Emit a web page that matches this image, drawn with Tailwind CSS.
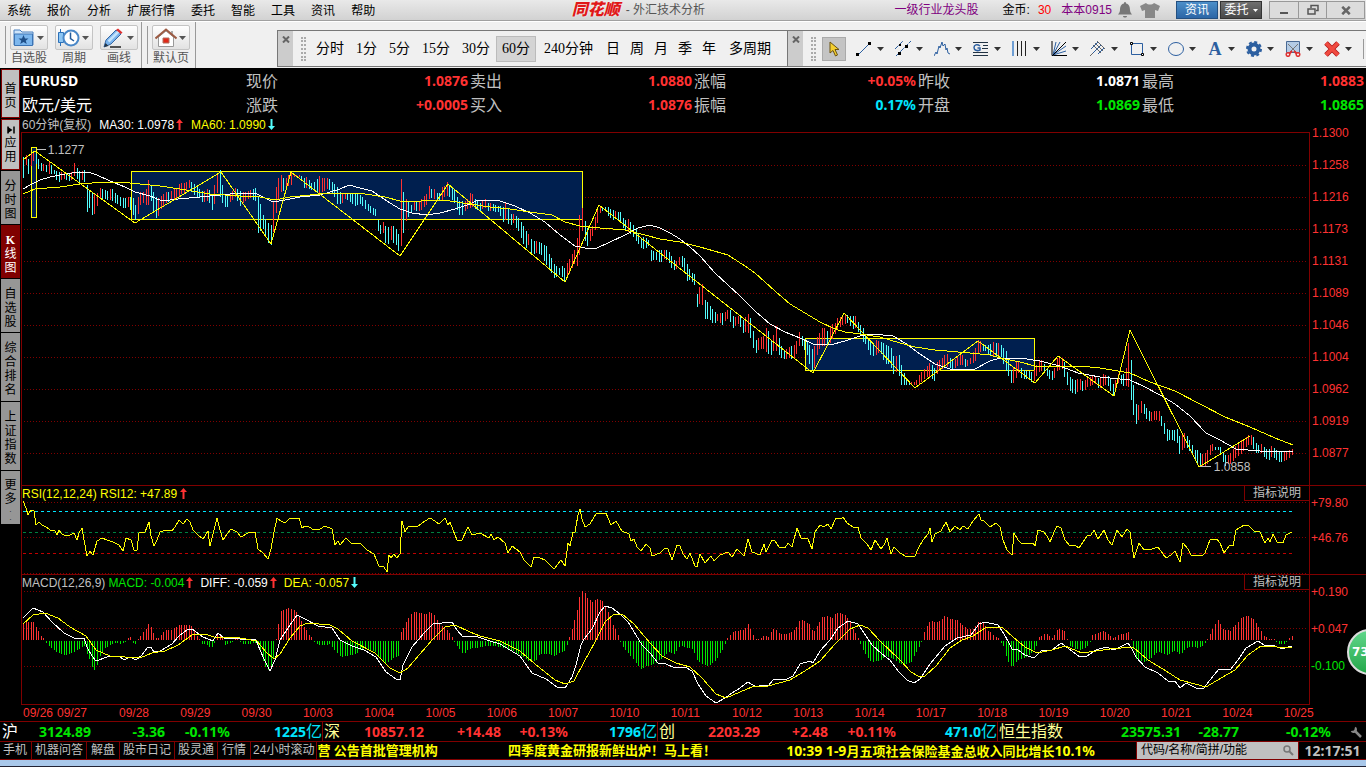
<!DOCTYPE html>
<html lang="zh-CN">
<head>
  <meta charset="UTF-8">
  <meta name="viewport" content="width=device-width, initial-scale=1.0">
  <title>同花顺 - 外汇技术分析</title>
  <script src="https://cdn.jsdelivr.net/npm/@tailwindcss/browser@4"></script>
</head>
<body class="relative flex min-h-screen flex-col overflow-x-hidden bg-black text-[12px] leading-4 text-[#c0c0c0] font-['Liberation_Sans','Noto_Sans_CJK_SC',sans-serif]">

  <!-- Símbolos reutilizados -->
  <svg class="hidden">
    <symbol id="up" viewBox="0 0 7 11"><path d="M3.5 0L7 4H4.5V11H2.5V4H0Z" fill="#ff3232"/></symbol>
    <symbol id="down" viewBox="0 0 7 11"><path d="M3.5 11L7 7H4.5V0H2.5V7H0Z" fill="#54fcfc"/></symbol>
    <symbol id="caret" viewBox="0 0 7 4"><path d="M0 0H7L3.5 4Z" fill="currentColor"/></symbol>
    <symbol id="close" viewBox="0 0 8 7"><path d="M1 0.5L7 6.5M7 0.5L1 6.5" stroke="#666" stroke-width="2"/></symbol>
  </svg>

  <!-- Menu -->
  <header class="flex h-[21px] items-center border-b border-[#a0a0a0] bg-linear-to-b from-[#e9e9e9] to-[#d2d2d2] text-black">
    <nav class="flex gap-4 pt-px pl-[7px] whitespace-nowrap">
      <a href="#">系统</a><a href="#">报价</a><a href="#">分析</a><a href="#">扩展行情</a><a href="#">委托</a><a href="#">智能</a><a href="#">工具</a><a href="#">资讯</a><a href="#">帮助</a>
    </nav>
    <h1 class="flex flex-1 items-center justify-center gap-1.5 pl-[7px] whitespace-nowrap text-[#555]">
      <span class="text-[16px] font-black italic text-[#e01818] [text-shadow:0_0_2px_#fff]">同花顺</span>
      <span>- 外汇技术分析</span>
    </h1>
    <div class="flex items-center whitespace-nowrap">
      <a href="#" class="mr-6 text-[#800080]">一级行业龙头股</a>
      <span class="mr-2">金币:</span>
      <span class="mr-2.5 text-[#ff0000]">30</span>
      <a href="#" class="mr-1.5 text-[#800080]">本本0915</a>
      <svg class="mr-2 h-4 w-[14px]" viewBox="0 0 14 16"><path d="M7 0C8 0 8 1 8 1.500C11 2 12 5 12 8C12 10 13 11 14 12.500H0C1 11 2 10 2 8C2 5 3 2 6 1.500C6 1 6 0 7 0ZM5 14H9C9 16 5 16 5 14Z" fill="#777"/></svg>
      <svg class="mr-4 h-4 w-5" viewBox="0 0 20 16"><path d="M6 1C8 3 12 3 14 1L20 4L18 9L15 8V16H5V8L2 9L0 4Z" fill="#888"/></svg>
      <button class="mr-0.5 h-[18px] w-[42px] border border-[#234f80] bg-linear-to-b from-[#4c8fc9] to-[#2c66a6] leading-4 text-white">资讯</button>
      <button class="mr-[7px] flex h-[18px] w-[42px] items-center justify-center gap-1 border border-[#333] bg-linear-to-b from-[#707070] to-[#484848] leading-4 text-white">委托<svg class="h-[3px] w-[5px]"><use href="#caret"/></svg></button>
      <div class="mr-px flex h-[18px] divide-x divide-[#999] border border-[#999] bg-[#dcdcdc]">
        <button class="flex w-[29px] items-center justify-center" aria-label="最小化"><svg class="h-3 w-3" viewBox="0 0 12 12"><path d="M2 9H10" stroke="#555" stroke-width="2"/></svg></button>
        <button class="flex w-[28px] items-center justify-center" aria-label="还原"><svg class="h-3 w-3" viewBox="0 0 12 12"><path d="M4 4V1.500H11V6.500H9M1 5H8V10H1Z" fill="none" stroke="#555" stroke-width="1.500"/></svg></button>
        <button class="flex w-[37px] items-center justify-center" aria-label="关闭"><svg class="h-[9px] w-[10px]"><use href="#close"/></svg></button>
      </div>
    </div>
  </header>

  <!-- Barra de ferramentas -->
  <div class="flex h-[47px] border-t border-white bg-[#f0f0f0] text-black">
    <div class="flex border-r border-[#999] pl-[3px] pr-[3px]">
      <i class="mt-1 mb-1 w-[3px] border-r border-[#999]"></i>
      <div class="flex gap-[7px] pl-1 pt-[3px] text-[#555]">
        <button class="flex w-[38px] flex-col items-center whitespace-nowrap">
          <span class="flex h-[25px] w-full items-center justify-between rounded-xs border border-[#c4c4c4] bg-linear-to-b from-white to-[#e2e2e2] px-0.5">
            <svg class="h-5 w-[21px]" viewBox="0 0 21 20"><path d="M1 17V2H7L9 4H20V17Z" fill="#cfe5fa" stroke="#4a80bf"/><path d="M1.500 6H19.500V17.500H1.500Z" fill="#7db7ee" stroke="#3c74b4"/><path d="M10.500 7L12 10.500H15.500L12.700 12.700L13.800 16L10.500 14L7.200 16L8.300 12.700L5.500 10.500H9Z" fill="#1f4f88"/></svg>
            <svg class="mr-px h-1 w-[7px]"><use href="#caret"/></svg>
          </span>自选股</button>
        <button class="flex w-[38px] flex-col items-center whitespace-nowrap">
          <span class="flex h-[25px] w-full items-center justify-between rounded-xs border border-[#c4c4c4] bg-linear-to-b from-white to-[#e2e2e2] px-0.5">
            <svg class="h-5 w-[22px]" viewBox="0 0 22 20"><path d="M2.500 1V18" stroke="#2c70b8"/><path d="M0.500 4.500H5.500V14.500H0.500Z" fill="#8cc6f4" stroke="#2c70b8"/><circle cx="13" cy="10" r="7.500" fill="#fff" stroke="#4a88c8" stroke-width="2"/><path d="M12.500 4.500V10.500L16 13" fill="none" stroke="#235c9c" stroke-width="1.500"/></svg>
            <svg class="mr-px h-1 w-[7px]"><use href="#caret"/></svg>
          </span>周期</button>
        <button class="flex w-[38px] flex-col items-center whitespace-nowrap">
          <span class="flex h-[25px] w-full items-center justify-between rounded-xs border border-[#c4c4c4] bg-linear-to-b from-white to-[#e2e2e2] px-0.5">
            <svg class="h-5 w-[21px]" viewBox="0 0 21 20"><path d="M1 19L3 12L13 2L18 6L8 16Z" fill="#78b2ec" stroke="#3768a4"/><path d="M5.500 13.500L15.500 3.500" stroke="#c4e2fb" stroke-width="2.500"/><path d="M13 2L15 0.500L19.500 4.500L18 6Z" fill="#e03030"/><path d="M1 19L2.500 15L5.500 18Z" fill="#234"/><path d="M7 19H18" stroke="#222" stroke-width="1.500"/></svg>
            <svg class="mr-px h-1 w-[7px]"><use href="#caret"/></svg>
          </span>画线</button>
      </div>
    </div>
    <div class="flex border-r border-[#999] pl-[3px] pr-[5px]">
      <i class="mt-1 mb-1 w-[3px] border-r border-[#999]"></i>
      <div class="pl-1 pt-[3px] text-[#555]">
        <button class="flex w-[38px] flex-col items-center whitespace-nowrap">
          <span class="flex h-[25px] w-full items-center justify-between rounded-xs border border-[#c4c4c4] bg-linear-to-b from-white to-[#e2e2e2] px-0.5">
            <svg class="h-5 w-[22px]" viewBox="0 0 22 20"><path d="M3.500 9V18.500H18.500V9L11 3Z" fill="#fff" stroke="#999"/><path d="M17 3V7" stroke="#aaa" stroke-width="2"/><path d="M0.500 10.500L11 1.500L21.500 10.500" fill="none" stroke="#9c5a42" stroke-width="2"/><path d="M8 10H14V15H8Z" fill="#e02818" stroke="#b07060"/></svg>
            <svg class="mr-px h-1 w-[7px]"><use href="#caret"/></svg>
          </span>默认页</button>
      </div>
    </div>

    <!-- Períodos -->
    <div class="mt-2 ml-[81px] flex h-[37px] items-center border-y border-l border-[#777] font-['Liberation_Serif','Noto_Sans_CJK_SC',serif] text-[14px] whitespace-nowrap">
      <button class="flex h-full w-[15px] justify-center bg-[#ccc] pt-[5px]" aria-label="关闭"><svg class="h-[7px] w-2"><use href="#close"/></svg></button>
      <i class="mr-1 ml-2 h-6 w-[5px] border-x-2 border-dotted border-[#aaa]"></i>
      <button class="h-[26px] px-1.5">分时</button>
      <button class="h-[26px] px-1.5">1分</button>
      <button class="h-[26px] px-1.5">5分</button>
      <button class="h-[26px] px-1.5">15分</button>
      <button class="h-[26px] px-1.5">30分</button>
      <button class="h-[26px] border border-[#bbb] bg-[#d4d4d4] px-[5px]">60分</button>
      <button class="h-[26px] px-2">240分钟</button>
      <button class="h-[26px] px-[5px]">日</button>
      <button class="h-[26px] px-[5px]">周</button>
      <button class="h-[26px] px-[5px]">月</button>
      <button class="h-[26px] px-[5px]">季</button>
      <button class="h-[26px] px-[5px]">年</button>
      <button class="h-[26px] pl-2 pr-4">多周期</button>
    </div>

    <!-- Ferramentas de desenho -->
    <div class="mt-2 flex h-[37px] flex-1 items-center border-y border-l border-[#777] text-[#333]">
      <button class="flex h-full w-[15px] justify-center bg-[#ccc] pt-[5px]" aria-label="关闭"><svg class="h-[7px] w-2"><use href="#close"/></svg></button>
      <i class="mr-1.5 ml-2 h-6 w-[5px] border-x-2 border-dotted border-[#aaa]"></i>
      <button class="mr-2.5 flex h-6 w-6 items-center justify-center border border-[#aaa] bg-[#c4c4c4]" aria-label="选择"><svg class="h-4 w-3" viewBox="0 0 12 16"><path d="M2 1V12L5 9.500L7.500 15L9.500 14L7 8.500H11Z" fill="#f4cf30" stroke="#6b5310"/></svg></button>
      <button class="flex w-[39px] items-center gap-[5px]" aria-label="线段"><svg class="h-4 w-4" viewBox="0 0 16 16"><path d="M2 14L14 2" stroke="#2c5fa0"/><path d="M0 12H3V15H0ZM12 1H15V4H12Z" fill="#000"/></svg><svg class="h-1 w-[7px]"><use href="#caret"/></svg></button>
      <button class="flex w-[39px] items-center gap-[5px]" aria-label="平行线"><svg class="h-4 w-4" viewBox="0 0 16 16"><path d="M0 8L8 0M1 15L16 0" stroke="#2c5fa0" stroke-dasharray="5 1"/><path d="M4 3H6V5H4ZM10 4H13V7H10ZM3 11H6V14H3Z" fill="#000"/></svg><svg class="h-1 w-[7px]"><use href="#caret"/></svg></button>
      <button class="flex w-[39px] items-center gap-[5px]" aria-label="波浪"><svg class="h-4 w-4" viewBox="0 0 16 16"><path d="M0 15L2 11L3 13L5 5L6 7L8 1L9 5L11 3L12 9L13 7L14 12L16 13" fill="none" stroke="#2c5fa0"/></svg><svg class="h-1 w-[7px]"><use href="#caret"/></svg></button>
      <button class="flex w-[39px] items-center gap-[5px]" aria-label="黄金分割"><svg class="h-4 w-4" viewBox="0 0 16 16"><path d="M0 1.500H15M10 4.500H15M9 7.500H15M0 11.500H15M0 14.500H15" stroke="#234" /><path d="M7 5C4 2.500 1 4 1 6.500C1 9 4 10.500 7 9V7H4.500" fill="none" stroke="#2c5fa0" stroke-width="1.500"/></svg><svg class="h-1 w-[7px]"><use href="#caret"/></svg></button>
      <button class="flex w-[39px] items-center gap-[5px]" aria-label="周期线"><svg class="h-4 w-4" viewBox="0 0 16 16"><path d="M0.500 0V15M1.500 0V15" stroke="#6f9fd4"/><path d="M5.500 0V15M9.500 0V15M13.500 0V15" stroke="#222"/></svg><svg class="h-1 w-[7px]"><use href="#caret"/></svg></button>
      <button class="flex w-[39px] items-center gap-[5px]" aria-label="速阻线"><svg class="h-4 w-4" viewBox="0 0 16 16"><path d="M1 0V14.500H16" fill="none" stroke="#000"/><path d="M2 14L5 1M2 14L9 1M2 14L15 5M2 14L15 10" stroke="#2c5fa0"/><path d="M2 14L15 1" stroke="#000"/></svg><svg class="h-1 w-[7px]"><use href="#caret"/></svg></button>
      <button class="flex w-[39px] items-center gap-[5px]" aria-label="安德鲁音叉"><svg class="h-4 w-4" viewBox="0 0 16 16"><path d="M0 15L5 10M3 4L11 12M5 2L13 10M7 0L15 8" stroke="#666"/><path d="M1 8L8 1M3 12L11 4M8 13L14 7" stroke="#2c5fa0"/></svg><svg class="h-1 w-[7px]"><use href="#caret"/></svg></button>
      <button class="flex w-[39px] items-center gap-[5px]" aria-label="矩形"><svg class="h-4 w-4" viewBox="0 0 16 16"><path d="M2.500 2.500H13.500V13.500H2.500Z" fill="none" stroke="#2c5fa0"/><path d="M1.500 1.500H3.500V3.500H1.500ZM12.500 12.500H14.500V14.500H12.500Z" fill="#fff" stroke="#000"/></svg><svg class="h-1 w-[7px]"><use href="#caret"/></svg></button>
      <button class="flex w-[39px] items-center gap-[5px]" aria-label="圆形"><svg class="h-4 w-4" viewBox="0 0 16 16"><ellipse cx="8" cy="8" rx="7.500" ry="6.500" fill="none" stroke="#2c5fa0"/></svg><svg class="h-1 w-[7px]"><use href="#caret"/></svg></button>
      <button class="flex w-[39px] items-center gap-[5px]" aria-label="文字"><span class="w-4 text-center font-['Liberation_Serif',serif] text-[18px] font-bold text-[#2c5fa0]">A</span><svg class="h-1 w-[7px]"><use href="#caret"/></svg></button>
      <button class="flex w-[39px] items-center gap-[5px]" aria-label="设置"><svg class="h-4 w-4" viewBox="0 0 16 16"><circle cx="8" cy="8" r="4.500" fill="none" stroke="#2c5fa0" stroke-width="4"/><circle cx="8" cy="8" r="7" fill="none" stroke="#2c5fa0" stroke-width="2" stroke-dasharray="3 2.500"/></svg><svg class="h-1 w-[7px]"><use href="#caret"/></svg></button>
      <button class="flex w-[39px] items-center gap-[5px]" aria-label="删除画线"><svg class="h-4 w-4" viewBox="0 0 16 16"><path d="M1.500 0.500H14.500V11.500H1.500Z" fill="#b4cbe4" stroke="#4a6a94"/><path d="M3 3L12 12M13 3L4 12" stroke="#777"/><path d="M7 10L4 13M9 10L12 13" stroke="#e03030" stroke-width="2"/><circle cx="3" cy="13.500" r="1.800" fill="#f0f0f0" stroke="#e03030" stroke-width="1.500"/><circle cx="13" cy="13.500" r="1.800" fill="#f0f0f0" stroke="#e03030" stroke-width="1.500"/></svg><svg class="h-1 w-[7px]"><use href="#caret"/></svg></button>
      <button class="flex w-[39px] items-center gap-[5px]" aria-label="全部删除"><svg class="h-4 w-4" viewBox="0 0 16 16"><path d="M2 2L14 14M14 2L2 14" stroke="#b01818" stroke-width="5"/><path d="M2 2L14 14M14 2L2 14" stroke="#f04a40" stroke-width="3.500"/></svg><svg class="h-1 w-[7px]"><use href="#caret"/></svg></button>
      <i class="h-5 w-px bg-[#999]"></i>
    </div>
  </div>

  <div class="flex flex-1">
    <!-- Abas laterais -->
    <nav class="flex w-[21px] shrink-0 flex-col gap-px px-px pt-px text-center leading-[14px] text-black">
      <a href="#" class="flex h-[49px] items-center justify-center border border-[#800000] bg-[#c0c0c0] px-[3px] pt-1">首页</a>
      <a href="#" class="flex h-[51px] flex-col items-center justify-center gap-0.5 border border-[#800000] bg-[#c0c0c0] px-[3px]"><svg class="h-2 w-2 shrink-0" viewBox="0 0 8 8"><path d="M1 0.500V7.500M7 0.500V7.500" stroke="#000" stroke-width="1.500"/><path d="M1 1L5.500 4L1 7Z" fill="#000"/></svg>应用</a>
      <a href="#" class="flex h-[53px] items-center justify-center bg-[#969696] px-[3px] pt-1">分时图</a>
      <a href="#" class="flex h-[53px] items-center justify-center bg-[#800000] px-[3px] pt-1 text-white"><span><b class="font-['Liberation_Serif',serif]">K</b> 线图</span></a>
      <a href="#" class="flex h-[53px] items-center justify-center bg-[#969696] px-[3px] pt-1">自选股</a>
      <a href="#" class="flex h-[68px] items-center justify-center bg-[#969696] px-[3px] pt-1">综合排名</a>
      <a href="#" class="flex h-[68px] items-center justify-center bg-[#969696] px-[3px] pt-1">上证指数</a>
      <a href="#" class="flex h-[53px] flex-col items-center bg-[#969696] px-[3px] pt-[7px]">更多<span class="text-[7px] leading-2">.<br>.</span></a>
    </nav>

    <main class="flex min-w-0 flex-1 flex-col">
      <!-- Cotações -->
      <dl class="grid grid-flow-col grid-cols-6 grid-rows-2 pt-px pl-px text-[16px] leading-6 whitespace-nowrap font-['Noto_Sans','Noto_Sans_CJK_SC',sans-serif]">
        <div class="text-[14px] font-bold text-white">EURUSD</div>
        <div class="text-white">欧元/美元</div>
        <div class="flex justify-between pr-[2px]"><dt>现价</dt><dd class="text-[14px] font-bold text-[#ff3232]">1.0876</dd></div>
        <div class="flex justify-between pr-[2px]"><dt>涨跌</dt><dd class="text-[14px] font-bold text-[#ff3232]">+0.0005</dd></div>
        <div class="flex justify-between pr-[2px]"><dt>卖出</dt><dd class="text-[14px] font-bold text-[#ff3232]">1.0880</dd></div>
        <div class="flex justify-between pr-[2px]"><dt>买入</dt><dd class="text-[14px] font-bold text-[#ff3232]">1.0876</dd></div>
        <div class="flex justify-between pr-[2px]"><dt>涨幅</dt><dd class="text-[14px] font-bold text-[#ff3232]">+0.05%</dd></div>
        <div class="flex justify-between pr-[2px]"><dt>振幅</dt><dd class="text-[14px] font-bold text-[#00e6ff]">0.17%</dd></div>
        <div class="flex justify-between pr-[2px]"><dt>昨收</dt><dd class="text-[14px] font-bold text-white">1.0871</dd></div>
        <div class="flex justify-between pr-[2px]"><dt>开盘</dt><dd class="text-[14px] font-bold text-[#00e600]">1.0869</dd></div>
        <div class="flex justify-between pr-[2px]"><dt>最高</dt><dd class="text-[14px] font-bold text-[#ff3232]">1.0883</dd></div>
        <div class="flex justify-between pr-[2px]"><dt>最低</dt><dd class="text-[14px] font-bold text-[#00e600]">1.0865</dd></div>
      </dl>

      <!-- Gráfico de preços -->
      <section class="flex flex-1">
        <div class="flex min-w-0 flex-1 flex-col">
          <div class="flex h-[15px] items-center gap-2 pl-px">
            <span>60分钟(复权)</span>
            <span class="flex items-center gap-[2px] text-white">MA30: 1.0978<svg class="h-[11px] w-[7px]"><use href="#up"/></svg></span>
            <span class="flex items-center gap-[2px] text-[#ffff00]">MA60: 1.0990<svg class="h-[11px] w-[7px]"><use href="#down"/></svg></span>
          </div>
          <div class="relative min-h-[353px] flex-1 border-x border-t border-[#800000]">
            <svg class="absolute size-full" viewBox="22 133 1287 352" preserveAspectRatio="none" shape-rendering="crispEdges" fill="none">
              <path d="M24 165.500H1308M24 197.500H1308M24 229.500H1308M24 261.500H1308M24 293.500H1308M24 325.500H1308M24 357.500H1308M24 389.500H1308M24 421.500H1308M24 453.500H1308" stroke="#800000" stroke-dasharray="1 2"/>
              <path d="M31.500 147.500H36.500V217.500H31.500ZM131.500 171.500H582.500V219.500H131.500ZM805.500 338.500H1034.500V370.500H805.500Z" fill="#001f4f" stroke="#ffff00"/>
              <path id="fall" stroke="#54fcfc"/>
              <path id="rise" stroke="#ff3232"/>
              <polyline stroke="#fff" points="23,189 30,185 40,180 50,177 65,174 80,172 88,172 97,175 110,181 125,187 135,192 150,196 162,201 178,199 200,197 230,194 255,193 265,198 273,202 285,200 300,197 320,195 340,189 349,185 360,188 372,191 381,197 390,203 400,209 412,213 427,215 440,213 455,209 470,204 476,201 490,200 500,201 515,206 530,213 545,222 560,235 575,246 585,248 597,248 610,242 625,235 638,228 650,225 660,228 670,233 680,239 690,247 700,256 715,273 740,296 755,311 770,324 785,332 800,338 813,344 830,345 845,341 860,336 872,334 893,336 905,343 920,354 935,364 950,369 975,369 990,361 1000,358 1020,358 1040,361 1060,366 1078,373 1100,377 1130,380 1145,387 1160,395 1175,404 1190,416 1206,433 1220,440 1236,449 1260,451 1293,452"/>
              <polyline stroke="#ffff00" points="23,194 35,189 60,187 80,184 105,182 130,183 160,186 180,189 210,194 240,196 260,197 275,200 290,197 320,194 350,193 365,194 385,197 400,201 412,202 430,200 450,201 470,204 490,207 510,209 530,212 552,215 565,222 580,226 600,228 625,230 645,235 660,239 680,242 700,247 728,255 745,266 755,273 775,291 790,304 805,313 820,322 835,329 845,332 860,334 880,337 900,343 915,347 935,350 970,353 990,355 1000,358 1020,362 1035,366 1080,366 1100,368 1130,373 1150,382 1175,391 1200,404 1225,417 1250,427 1275,438 1293,445"/>
              <polyline stroke="#ffff00" points="23,160 35,151 135,223 221,172 271,244 291,172 400,256 448,184 565,282 599,205 813,373 844,313 915,388 978,341 1035,383 1058,356 1114,396 1130,330 1199,467 1250,436"/>
              <path d="M37 149.500H46M1200 466.500H1211" stroke="#c0c0c0"/>
            </svg>
            <span class="absolute top-[2.6%] left-[2%]">1.1277</span>
            <span class="absolute top-[92.6%] left-[92.6%]">1.0858</span>
          </div>
        </div>
        <div class="flex w-14 flex-col pl-[2px] text-[#ff3232]">
          <span class="flex flex-2 items-center">1.1300</span>
          <span class="flex flex-2 items-center">1.1258</span>
          <span class="flex flex-2 items-center">1.1216</span>
          <span class="flex flex-2 items-center">1.1173</span>
          <span class="flex flex-2 items-center">1.1131</span>
          <span class="flex flex-2 items-center">1.1089</span>
          <span class="flex flex-2 items-center">1.1046</span>
          <span class="flex flex-2 items-center">1.1004</span>
          <span class="flex flex-2 items-center">1.0962</span>
          <span class="flex flex-2 items-center">1.0919</span>
          <span class="flex flex-2 items-center">1.0877</span>
          <span class="flex-1"></span>
        </div>
      </section>

      <!-- RSI -->
      <section class="flex border-t border-[#800000]">
        <div class="min-w-0 flex-1 border-x border-[#800000]">
          <div class="flex h-[15px] items-center justify-between">
            <span class="flex items-center gap-[3px] text-[#ffff00]">RSI(12,12,24) RSI12: +47.89<svg class="h-[11px] w-[7px]"><use href="#up"/></svg></span>
            <button class="h-[15px] border-b border-l border-[#800000] px-2 leading-[14px]">指标说明</button>
          </div>
          <svg class="h-[73px] w-full" viewBox="22 501 1287 73" preserveAspectRatio="none" shape-rendering="crispEdges" fill="none">
            <path d="M24 502.500H1308M24 537.500H1308M24 573.500H1308" stroke="#800000" stroke-dasharray="1 2"/>
            <path d="M23 511.500H1293" stroke="#00e6ff" stroke-dasharray="3 3"/>
            <path d="M23 532.500H1293" stroke="#008040" stroke-dasharray="3 3"/>
            <path d="M23 553.500H1293" stroke="#c00000" stroke-dasharray="3 3"/>
            <polyline stroke="#ffff00" points="23,501 26,508 28,515 31,510 34,511 36,525 39,522 42,525 46,527 50,530 55,531 57,535 59,530 62,534 66,536 70,535 74,533 77,540 79,533 82,528 84,540 87,556 90,551 93,555 97,541 102,538 107,540 113,542 119,545 123,551 126,538 131,540 134,550 137,550 139,533 145,532 149,522 151,536 154,546 157,540 160,532 166,530 172,531 175,527 179,520 183,524 187,519 190,522 193,530 198,535 203,539 208,531 210,546 214,530 217,518 220,530 223,540 227,534 231,529 237,532 241,537 248,533 255,532 258,549 263,553 268,559 271,549 274,532 277,518 281,521 285,523 289,519 299,518 302,528 305,526 309,527 314,530 320,529 325,526 332,529 335,545 338,541 340,545 346,538 352,544 360,543 367,550 374,554 379,566 384,567 387,572 389,555 391,558 394,554 397,558 400,554 402,521 405,532 408,527 418,526 425,521 430,518 435,521 439,524 445,518 448,525 450,522 453,530 457,540 462,540 468,527 472,535 480,533 489,538 491,534 494,540 498,537 505,543 508,553 512,546 520,552 524,560 531,567 534,557 540,558 545,560 554,569 561,560 565,566 568,543 570,546 573,532 575,532 578,515 580,509 582,519 585,527 590,524 596,514 606,513 611,525 616,521 622,531 629,534 631,541 634,539 637,547 641,551 646,544 650,548 652,556 660,553 665,548 668,549 672,560 677,545 680,546 683,554 687,559 690,553 695,566 697,567 700,554 705,563 711,556 714,561 720,555 728,552 732,557 737,549 744,556 748,539 752,552 760,555 764,544 766,552 772,540 775,541 779,547 785,548 788,543 792,547 797,528 801,538 808,539 812,549 815,532 820,525 824,527 828,524 831,529 836,518 841,519 843,517 847,523 853,527 858,527 861,538 867,544 871,550 875,540 881,549 884,545 887,538 891,554 894,547 900,553 907,557 915,556 918,549 923,540 928,534 930,528 932,542 935,534 941,531 946,522 950,532 955,526 960,530 963,526 968,529 973,521 979,514 981,520 984,521 990,527 996,523 1000,527 1003,540 1007,550 1012,555 1014,533 1018,540 1022,544 1033,543 1035,546 1038,530 1044,532 1047,536 1050,542 1055,530 1057,526 1061,528 1065,540 1070,546 1075,545 1079,548 1085,539 1088,535 1091,535 1094,530 1098,539 1104,530 1108,540 1112,545 1117,530 1122,537 1127,529 1130,532 1134,558 1139,543 1144,550 1152,549 1158,547 1163,554 1166,558 1171,555 1175,551 1180,562 1183,543 1188,549 1191,555 1202,556 1205,553 1210,540 1217,539 1220,543 1224,553 1230,545 1233,546 1236,530 1244,525 1248,525 1254,531 1260,532 1265,543 1268,538 1270,542 1273,534 1277,542 1283,543 1286,535 1292,532"/>
          </svg>
        </div>
        <div class="flex w-14 flex-col gap-[19px] pt-[9px] pl-px text-[#ff3232]"><span>+79.80</span><span>+46.76</span></div>
      </section>

      <!-- MACD -->
      <section class="flex border-t border-[#800000]">
        <div class="min-w-0 flex-1 border-x border-b border-[#800000]">
          <div class="flex h-[15px] items-center gap-[7px]">
            <span class="flex items-center gap-[2px]">MACD(12,26,9) <span class="ml-px text-[#00e600]">MACD: -0.004</span><svg class="h-[11px] w-[7px]"><use href="#up"/></svg></span>
            <span class="flex items-center gap-[2px] text-white">DIFF: -0.059<svg class="h-[11px] w-[7px]"><use href="#up"/></svg></span>
            <span class="flex items-center gap-[2px] text-[#ffff00]">DEA: -0.057<svg class="h-[11px] w-[7px]"><use href="#down"/></svg></span>
            <button class="ml-auto h-[15px] border-b border-l border-[#800000] px-2 leading-[14px]">指标说明</button>
          </div>
          <svg class="h-[114px] w-full" viewBox="22 590 1287 114" preserveAspectRatio="none" shape-rendering="crispEdges" fill="none">
            <path d="M24 591.500H1308M24 628.500H1308M24 666.500H1308" stroke="#800000" stroke-dasharray="1 2"/>
            <path id="plus" stroke="#ff3232"/>
            <path id="minus" stroke="#00e600"/>
            <polyline stroke="#fff" points="23,618 33,608 43,612 52,622 64,633 74,638 84,638 87,647 92,656 96,661 107,657 119,656 124,660 130,657 136,660 142,655 147,648 151,647 154,652 160,651 172,644 179,636 187,630 192,629 203,637 213,641 218,633 224,638 240,639 256,640 260,650 265,661 270,671 275,660 280,640 288,628 297,615 305,619 318,626 332,628 340,640 352,646 364,650 376,657 386,672 396,679 400,680 403,665 412,647 425,632 433,624 452,622 457,630 463,637 475,636 490,641 500,644 510,650 520,656 532,673 546,679 557,687 565,688 572,677 576,665 581,645 584,639 592,629 600,612 605,606 612,608 620,614 628,622 636,635 642,645 650,653 658,663 666,664 675,668 685,667 692,671 698,684 706,696 716,703 725,698 732,693 740,688 748,682 756,687 762,685 768,686 774,679 785,680 793,676 800,664 810,661 813,663 820,651 830,640 838,628 848,621 858,624 866,636 872,645 882,654 890,660 898,671 907,680 914,683 920,679 930,664 945,646 957,638 971,635 979,624 985,622 998,625 1004,634 1009,643 1012,649 1017,649 1025,655 1034,658 1042,650 1052,650 1061,643 1068,648 1080,657 1087,656 1096,650 1106,647 1114,650 1128,643 1132,649 1136,657 1145,667 1158,673 1168,681 1175,681 1180,688 1186,683 1196,688 1204,688 1210,680 1219,669 1230,670 1238,660 1246,648 1258,641 1264,645 1275,646 1282,649 1288,647 1292,646"/>
            <polyline stroke="#ffff00" points="23,624 33,615 45,613 58,618 70,627 86,636 96,650 110,656 140,658 152,653 165,651 178,645 192,635 205,634 214,637 240,638 257,641 266,652 274,659 280,654 290,638 300,626 308,623 330,625 338,629 352,641 375,653 390,668 400,673 408,668 420,654 433,639 445,627 455,625 470,632 480,636 500,641 520,651 535,664 555,680 565,684 574,681 584,662 595,642 605,622 614,614 622,614 634,624 650,643 662,656 676,663 690,667 702,678 716,694 726,698 740,692 752,687 768,686 790,680 808,669 820,661 835,644 850,629 860,625 868,628 880,641 900,660 911,672 918,676 925,676 936,666 950,648 962,640 973,636 985,628 1002,627 1013,637 1025,647 1037,653 1052,650 1065,646 1082,653 1096,651 1110,649 1133,647 1148,660 1166,671 1180,680 1195,684 1206,687 1216,681 1235,670 1248,655 1261,646 1292,648"/>
          </svg>
        </div>
        <div class="flex w-14 flex-col gap-[21px] pt-[9px] pl-px text-[#ff3232]"><span>+0.190</span><span>+0.047</span><span class="text-[#00e600]">-0.100</span></div>
      </section>

      <!-- Datas -->
      <div class="flex h-4 pr-[21px] pl-[2px] text-[#ff3232]">
        <span class="w-[34px]">09/26</span><span class="w-[62px]">09/27</span>
        <span class="flex-1">09/28</span><span class="flex-1">09/29</span><span class="flex-1">09/30</span><span class="flex-1">10/03</span><span class="flex-1">10/04</span><span class="flex-1">10/05</span><span class="flex-1">10/06</span><span class="flex-1">10/07</span><span class="flex-1">10/10</span><span class="flex-1">10/11</span><span class="flex-1">10/12</span><span class="flex-1">10/13</span><span class="flex-1">10/14</span><span class="flex-1">10/17</span><span class="flex-1">10/18</span><span class="flex-1">10/19</span><span class="flex-1">10/20</span><span class="flex-1">10/21</span><span class="flex-1">10/24</span><span class="flex-1">10/25</span>
      </div>
    </main>
  </div>

  <!-- Índices -->
  <div class="grid h-[21px] grid-cols-[323fr_335fr_340fr_368fr] divide-x divide-[#800000] border-y border-[#800000] text-right text-[14px] leading-[19px] font-bold whitespace-nowrap text-[#00e600] font-['Noto_Sans','Noto_Sans_CJK_SC',sans-serif]">
    <div class="flex"><span class="w-[18px] text-[16px] font-normal text-white">沪</span><span class="w-[73px]">3124.89</span><span class="w-[74px]">-3.36</span><span class="w-[65px]">-0.11%</span><span class="flex-1 text-[#00e6ff]">1225<span class="text-[16px] font-normal">亿</span></span></div>
    <div class="flex text-[#ff3232]"><span class="w-[17px] text-[16px] font-normal text-[#ffff96]">深</span><span class="w-[84px]">10857.12</span><span class="w-[77px]">+14.48</span><span class="w-[67px]">+0.13%</span><span class="flex-1 text-[#00e6ff]">1796<span class="text-[16px] font-normal">亿</span></span></div>
    <div class="flex text-[#ff3232]"><span class="w-[17px] text-[16px] font-normal text-[#ffff96]">创</span><span class="w-[85px]">2203.29</span><span class="w-[68px]">+2.48</span><span class="w-[68px]">+0.11%</span><span class="flex-1 text-[#00e6ff]">471.0<span class="text-[16px] font-normal">亿</span></span></div>
    <div class="flex items-center"><span class="w-[65px] text-[16px] font-normal text-[#ffff96]">恒生指数</span><span class="w-[118px]">23575.31</span><span class="w-[58px]">-28.77</span><span class="w-[92px]">-0.12%</span><svg class="mr-1 ml-auto h-3 w-3" viewBox="0 0 12 12"><path d="M4 4L11 11" stroke="#888" stroke-width="2.500"/><path d="M5 1.500A2.500 2.500 0 1 1 1.500 5" fill="none" stroke="#888" stroke-width="2"/></svg></div>
  </div>

  <!-- Notícias e busca -->
  <footer class="flex h-[18px] border-b border-[#800000] leading-[17px] whitespace-nowrap">
    <nav class="flex divide-x divide-[#800000] border-r border-[#800000]">
      <a href="#" class="pr-1 pl-[3px]">手机</a><a href="#" class="px-[3px]">机器问答</a><a href="#" class="px-1">解盘</a><a href="#" class="px-[3px]">股市日记</a><a href="#" class="px-[3px]">股灵通</a><a href="#" class="px-1">行情</a><a href="#" class="px-[2px]">24小时滚动</a>
    </nav>
    <div class="flex min-w-0 flex-1 justify-between overflow-hidden pr-[41px] text-[13px] font-bold text-[#ffff00] font-['Noto_Sans','Noto_Sans_CJK_SC',sans-serif]">
      <span>营 公告首批管理机构</span><span>四季度黄金研报新鲜出炉！马上看！</span><span><span class="text-[14px]">10:39 1-9</span>月五项社会保险基金总收入同比增长<span class="text-[14px]">10.1%</span></span>
    </div>
    <label class="flex w-[163px] items-center border-x border-[#800000] bg-[#c0c0c0] text-black">
      <input type="text" aria-label="搜索" value="代码/名称/简拼/功能" class="min-w-0 flex-1 pl-1 outline-none">
      <svg class="mr-1 h-[11px] w-[11px]" viewBox="0 0 11 11"><circle cx="4" cy="4" r="3" fill="none" stroke="#777" stroke-width="1.500"/><path d="M6 6L10 10" stroke="#777" stroke-width="2"/></svg>
    </label>
    <time class="w-[67px] text-center text-[14px] font-bold font-['Noto_Sans',sans-serif]">12:17:51</time>
  </footer>
  <div class="h-[7px] border-b border-[#223] bg-[#a9c8ea]"></div>

  <!-- Medidor flutuante -->
  <div class="absolute top-[629px] -right-[27px] flex h-[46px] w-[46px] items-center rounded-full border-2 border-[#ddd] bg-linear-to-b from-[#5fd68a] to-[#22a84a] pl-[3px] text-[12px] font-bold text-white font-['DejaVu_Sans',sans-serif]">73</div>

  <script>
    // x, máxima, mínima
    const prices = [
      23,157,177, 26,155,164, 28,159,173, 31,153,165, 34,150,158, 39,161,170, 43,164,170, 46,165,171, 49,162,173, 54,170,173, 57,172,182, 63,172,178, 68,173,180, 72,172,178, 74,163,175, 77,168,178, 80,173,182, 83,170,177, 85,170,184, 87,185,211, 90,192,205, 92,193,214, 95,195,212, 97,193,205, 100,188,198, 104,189,197, 108,192,200, 111,188,199, 115,193,202, 119,196,204, 123,198,207, 128,197,206,
      133,198,214, 136,208,221, 138,197,213, 141,190,199, 145,193,204, 148,180,204, 151,185,200, 154,195,215, 157,198,218, 160,197,209, 165,192,203, 170,192,199, 176,188,197, 180,183,194, 185,183,191, 189,180,187, 193,183,194, 198,188,196, 203,192,202, 208,188,199, 212,196,209, 215,180,200, 218,172,188, 220,170,196, 223,193,205, 226,195,207, 231,192,200, 235,188,196, 240,191,205, 245,192,200, 250,190,197, 256,188,200,
      258,196,232, 263,215,228, 267,222,241, 271,225,244, 274,191,225, 277,185,205, 279,170,190, 282,177,191, 285,179,188, 288,175,185, 291,172,184, 294,175,176, 300,175,176, 303,179,187, 307,176,187, 311,183,189, 315,182,190, 319,176,194, 323,178,190, 328,178,188, 333,183,193, 337,187,203, 341,193,203, 345,193,198, 350,193,201, 355,193,205, 360,195,203, 365,200,208, 370,206,212, 375,209,215, 378,220,230, 381,228,235,
      383,222,232, 386,228,247, 390,226,238, 394,226,243, 397,230,244, 399,237,256, 401,179,245, 404,198,225, 407,200,217, 410,206,213, 414,202,209, 418,202,210, 422,198,208, 426,194,204, 429,186,198, 432,190,197, 435,188,198, 438,196,200, 441,188,200, 444,186,196, 447,182,195, 450,188,196, 453,187,200, 456,195,206, 460,203,216, 463,200,213, 466,202,208, 469,192,208, 472,194,206, 476,200,209, 480,203,210, 484,198,206,
      488,203,210, 492,203,210, 498,206,211, 503,207,221, 506,200,218, 509,214,225, 513,214,222, 517,217,228, 521,222,237, 525,230,248, 528,234,244, 532,241,254, 537,241,252, 542,243,255, 546,246,264, 550,256,270, 554,264,277, 558,268,274, 561,268,274, 563,264,278, 565,272,282, 568,259,275, 571,258,268, 573,250,266, 576,250,258, 578,225,272, 580,204,235, 583,210,228, 585,221,240, 588,232,248, 591,228,236, 594,222,232,
      597,208,222, 600,206,212, 604,207,208, 608,207,215, 612,210,219, 616,211,218, 620,212,222, 624,220,228, 628,219,231, 632,224,235, 636,228,240, 640,238,246, 644,236,248, 648,240,245, 651,250,260, 655,252,258, 660,250,262, 664,250,258, 668,250,260, 672,258,269, 676,261,268, 680,256,262, 683,256,268, 687,264,280, 690,271,278, 694,274,284, 697,294,306, 699,287,303, 702,284,304, 705,300,318, 709,304,318, 713,310,323,
      717,314,320, 722,313,324, 726,311,318, 729,307,318, 732,315,328, 736,317,324, 739,315,323, 742,321,332, 746,316,330, 749,313,333, 752,328,345, 756,340,352, 759,337,347, 763,336,348, 767,325,352, 770,343,356, 773,335,350, 777,323,350, 780,345,356, 784,350,358, 788,348,357, 792,345,358, 795,345,356, 798,332,348, 801,331,340, 803,340,350, 806,338,348, 808,343,360, 810,346,365, 813,350,371, 815,341,362, 818,335,350,
      821,328,345, 825,328,345, 828,332,345, 831,324,340, 834,325,335, 837,318,328, 841,317,325, 844,313,323, 848,315,322, 852,316,328, 856,316,326, 859,325,333, 862,325,340, 866,338,344, 870,342,354, 873,345,355, 876,340,354, 880,341,350, 884,343,362, 888,346,363, 890,340,360, 892,355,374, 895,359,372, 898,350,370, 901,365,384, 905,376,384, 909,382,384, 914,382,384, 918,377,384, 922,370,380, 926,367,376, 930,362,376,
      934,368,380, 938,360,370, 942,358,368, 946,352,365, 950,358,367, 954,360,368, 958,354,364, 962,355,364, 966,360,366, 970,358,363, 974,350,362, 978,340,353, 981,342,350, 985,345,350, 989,345,354, 992,341,356, 996,343,355, 1000,343,352, 1004,349,366, 1007,352,372, 1010,370,380, 1012,370,383, 1015,362,380, 1018,362,372, 1022,370,378, 1027,371,378, 1033,372,382, 1037,362,372, 1041,360,370, 1045,365,371, 1049,370,378,
      1053,371,379, 1057,358,370, 1062,358,368, 1064,362,376, 1067,372,384, 1071,378,392, 1075,380,393, 1079,378,388, 1083,382,391, 1087,378,386, 1091,376,384, 1095,376,383, 1099,378,388, 1103,374,385, 1107,375,382, 1111,380,393, 1114,386,395, 1116,374,385, 1119,374,380, 1122,376,385, 1126,368,385, 1129,331,387, 1132,374,405, 1134,396,423, 1137,408,423, 1140,400,412, 1143,402,411, 1147,410,420, 1151,412,420, 1155,411,418,
      1159,411,420, 1163,420,430, 1166,428,440, 1170,430,438, 1174,430,440, 1176,426,436, 1179,436,453, 1183,432,448, 1186,434,445, 1190,442,452, 1195,450,458, 1198,450,467, 1201,454,464, 1204,455,466, 1208,448,462, 1211,443,450, 1214,447,449, 1218,447,449, 1221,447,453, 1224,455,465, 1228,455,463, 1232,450,462, 1236,444,455, 1240,440,455, 1244,438,448, 1248,435,444, 1251,435,444, 1254,438,450, 1257,446,453, 1260,443,450,
      1264,447,456, 1268,450,460, 1272,445,455, 1276,450,459, 1280,452,461, 1285,452,460, 1290,450,456, 1293,449,453
    ];

    // x, altura da barra do MACD
    const macd = [
      23,17, 28,18, 34,18, 37,10, 41,4, 44,1, 47,-2, 52,-7, 58,-11, 63,-13, 68,-13, 74,-10, 80,-7, 84,-4, 87,-12, 90,-20, 93,-28, 96,-27, 99,-16, 104,-7, 110,-3, 116,-1, 121,-2, 127,1, 130,3, 134,-2, 137,-1, 140,4, 146,11, 148,16, 151,13, 154,4, 157,1, 160,4, 165,10, 172,10, 178,15, 190,15, 194,9, 198,2, 201,-2, 206,-2, 211,-7, 215,1, 218,8, 221,3, 225,-3, 229,-1, 234,1, 238,1, 242,-2, 247,-2, 255,-1,
      260,-10, 265,-25, 270,-30, 272,-20, 275,-8, 277,10, 280,28, 285,31, 289,32, 295,29, 298,26, 303,15, 309,5, 314,0, 318,-3, 325,-3, 330,-2, 335,-9, 341,-15, 347,-14, 355,-12, 362,-7, 370,-8, 375,-10, 380,-16, 386,-22, 392,-17, 399,-13, 401,8, 405,16, 410,26, 415,28, 425,26, 430,28, 435,24, 440,15, 447,10, 452,3, 455,-2, 460,-8, 463,-13, 468,-7, 475,-6, 485,-4, 495,-4, 505,-6, 515,-10, 523,-15, 530,-20, 535,-19,
      540,-12, 548,-12, 555,-14, 561,-10, 566,-8, 568,1, 571,6, 573,16, 577,30, 580,49, 584,49, 587,42, 592,38, 598,42, 603,38, 608,28, 613,15, 618,5, 621,-2, 625,-8, 633,-17, 640,-27, 647,-24, 655,-22, 663,-15, 668,-10, 674,-12, 680,-4, 685,-5, 692,-7, 697,-18, 702,-22, 708,-24, 714,-20, 719,-13, 724,-4, 728,4, 735,9, 743,10, 748,16, 752,6, 756,1, 760,1, 764,5, 768,3, 774,12, 780,6, 785,6, 791,8, 795,10, 798,18,
      802,20, 810,15, 813,7, 817,14, 822,23, 828,24, 832,22, 836,27, 844,26, 850,18, 855,7, 860,-2, 865,-12, 871,-20, 880,-19, 885,-14, 890,-16, 895,-18, 900,-22, 905,-23, 911,-20, 916,-10, 920,-3, 922,3, 925,10, 930,20, 935,17, 940,19, 945,25, 950,21, 957,20, 962,15, 967,11, 973,11, 978,18, 983,17, 988,9, 995,4, 1000,1, 1003,-4, 1008,-20, 1012,-26, 1017,-18, 1023,-16, 1028,-14, 1035,-7, 1039,3, 1045,7, 1052,2,
      1057,10, 1060,12, 1065,8, 1068,-2, 1073,-6, 1079,-8, 1085,-6, 1089,-2, 1092,5, 1098,7, 1104,9, 1110,4, 1112,1, 1117,5, 1123,6, 1129,8, 1132,-3, 1135,-16, 1140,-19, 1145,-20, 1152,-15, 1158,-9, 1163,-12, 1168,-13, 1175,-8, 1180,-13, 1186,-6, 1192,-5, 1199,-6, 1203,-3, 1207,1, 1210,6, 1214,15, 1218,20, 1223,11, 1230,9, 1236,16, 1242,23, 1248,24, 1254,20, 1260,10, 1264,4, 1268,1, 1275,1, 1278,-2, 1284,-2, 1288,2, 1293,4
    ];

    // Valor interpolado da coluna col em uma lista de linhas com size colunas
    function valueAt(list, size, col, x) {
      let i = 0;
      while (i + size < list.length - size && list[i + size] < x) i += size;
      const t = Math.min(1, Math.max(0, (x - list[i]) / (list[i + size] - list[i])));
      return list[i + col] + (list[i + size + col] - list[i + col]) * t;
    }

    const paths = { rise: "", fall: "", plus: "", minus: "" };
    let last = 165;

    for (let n = 0; n < 498; n++) {
      const x = Math.round(23 + n * 2.5525);
      const high = Math.round(valueAt(prices, 3, 1, x));
      const low = Math.round(valueAt(prices, 3, 2, x));
      const middle = (high + low) / 2 + Math.sin(n * 12.9) * 2;
      paths[middle > last ? "fall" : "rise"] += `M${x + 0.5} ${high}V${low + 1}`;
      last = middle;

      const bar = Math.round(valueAt(macd, 2, 1, x));
      if (bar > 0) paths.plus += `M${x + 0.5} 640V${640 - bar}`;
      else paths.minus += `M${x + 0.5} 641V${642 - bar}`;
    }

    for (const id in paths) document.getElementById(id).setAttribute("d", paths[id]);
  </script>
</body>
</html>
